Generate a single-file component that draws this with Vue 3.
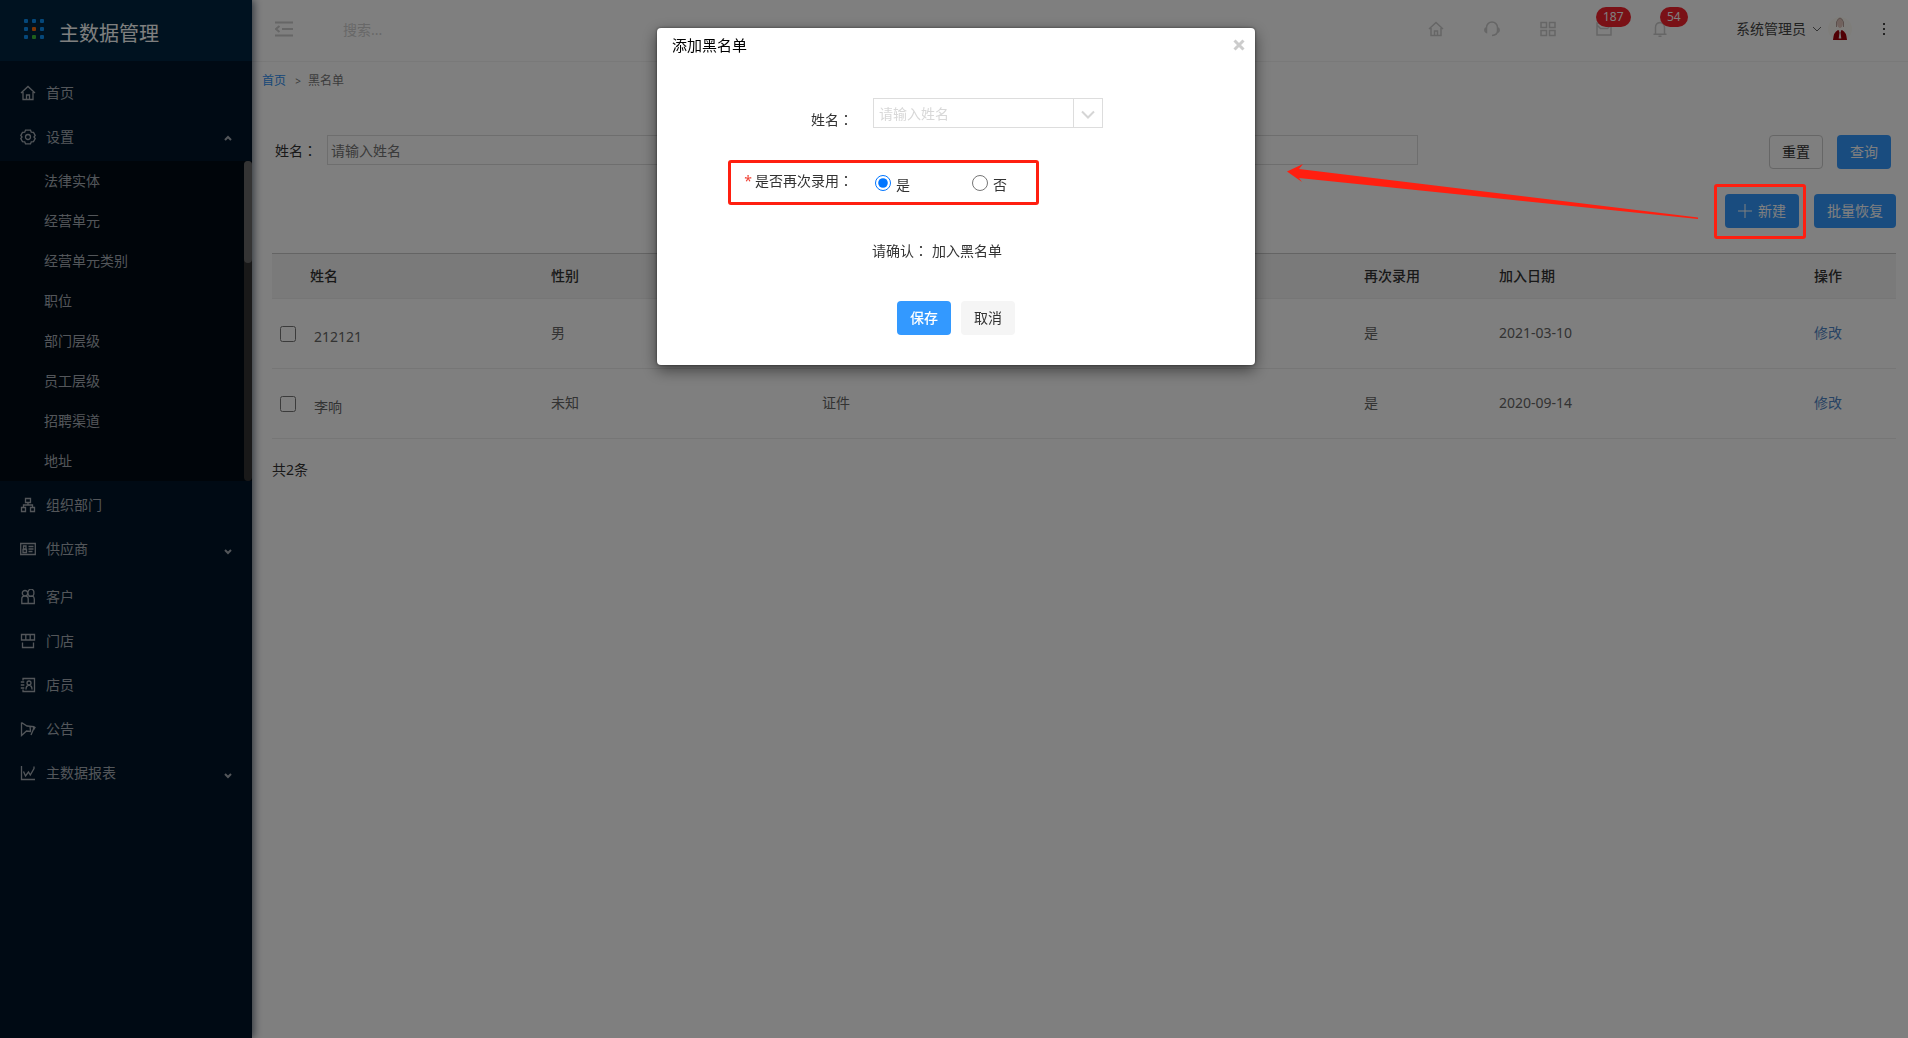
<script setup>
import { ref } from 'vue'

const icons = {
  home: 'M1 8 8 1.5 15 8M3 7v7.5h10V7M6.5 14.5V10h3v4.5',
  gear: 'M5.500 1.200h5l.8 2 2.200.2 1.700 3.100L14 8l1.200 1.500-1.700 3.100-2.200.2-.8 2h-5l-.8-2-2.200-.2L.8 9.500 2 8 .8 6.500l1.700-3.100 2.200-.2zM8 5.500a2.500 2.500 0 1 0 0 5 2.500 2.500 0 1 0 0-5',
  org: 'M5.500 1.500h5v4h-5zM1.500 10.500h4v4h-4zM10.500 10.500h4v4h-4zM8 5.500V8M3.500 10.500V8h9v2.500',
  card: 'M.7 2.500h14.600v11H.7zM3 11.500V8.500h3.500v3zM3.500 5h2.500v3H3.500zM8.500 5.500h5M8.500 8h5M8.500 10.500h4',
  clients: 'M2.300 4.200a2.700 2.700 0 1 1 5.400 0 2.700 2.700 0 1 1-5.400 0M8.200 3.800a2.900 2.900 0 1 1 5.600 0 2.900 2.900 0 1 1-5.600 0M1.800 14.500V10q0-3 3.200-3t3.200 3v4.500zM8.500 7.500q5.500-2 5.800 2.500v4.500H8.500',
  shop: 'M1.500 1.500h13v5.500h-13zM5.800 1.500V7M10.200 1.500V7M2.500 9.500v5h11v-5',
  staff: 'M3 3.500v-2h11.500v13H3v-2M.8 5h3.500M.8 8h3.500M.8 11h3.500M9 4a2 2 0 1 0 0 4 2 2 0 1 0 0-4M6 12.500q0-4 3-4.500 3 .5 3 4.500',
  notice: 'M1.500 1.500v13l5-4.500 4.500.5M1.500 1.500 7 5l6.500.5v2.500L11 14M10 5.500 10.500 10M13.500 5.500l1.500 1-1.500 2.500',
  chart: 'M1.500 1v13.500H15M3.500 6.500 5.500 11l3-4 1.800 3L14 3.500V1.500',
}

const menu = [
  { label: '首页', icon: 'home' },
  {
    label: '设置',
    icon: 'gear',
    open: true,
    children: ['法律实体', '经营单元', '经营单元类别', '职位', '部门层级', '员工层级', '招聘渠道', '地址'],
  },
  { label: '组织部门', icon: 'org' },
  { label: '供应商', icon: 'card', children: [] },
  { label: '客户', icon: 'clients' },
  { label: '门店', icon: 'shop' },
  { label: '店员', icon: 'staff' },
  { label: '公告', icon: 'notice' },
  { label: '主数据报表', icon: 'chart', children: [] },
]

const rows = [
  { name: '212121', sex: '男', card: '', rehire: '是', date: '2021-03-10' },
  { name: '李响', sex: '未知', card: '证件', rehire: '是', date: '2020-09-14' },
]

const logoColors = ['b', 'b', 'b', 'b', 'o', 'b', 'b', 'g', 'b']
const rehire = ref('yes')
</script>

<template>
  <div class="page">
    <aside class="sidebar">
      <div class="brand">
        <div class="logo"><i v-for="(c, i) in logoColors" :key="i" :class="c"></i></div>
        <span>主数据管理</span>
      </div>
      <nav>
        <div v-for="item in menu" :key="item.label">
          <a href="#" class="item">
            <svg class="icon" viewBox="0 0 16 16"><path :d="icons[item.icon]" /></svg>
            <span>{{ item.label }}</span>
            <svg v-if="item.children" class="caret" :class="{ open: item.open }" viewBox="0 0 8 6">
              <path :d="item.open ? 'M1 5 4 2l3 3' : 'M1 1l3 3 3-3'" />
            </svg>
          </a>
          <div v-if="item.children" class="sub">
            <div class="links">
              <a v-for="child in item.children" :key="child" href="#">{{ child }}</a>
            </div>
            <div v-if="item.open" class="track"><div class="thumb"></div></div>
          </div>
        </div>
      </nav>
    </aside>

    <div class="main">
      <header class="topbar">
        <button class="fold" aria-label="收起菜单">
          <svg viewBox="0 0 18 16"><path d="M0 1.500h18M7 8h11M0 14.500h18M4.500 5 1 8l3.500 3" /></svg>
        </button>
        <input class="search" type="text" placeholder="搜索..." aria-label="搜索" />
        <div class="tools">
          <a href="#" class="tool" aria-label="首页">
            <svg viewBox="0 0 16 16"><path :d="icons.home" /></svg>
          </a>
          <a href="#" class="tool" aria-label="客服">
            <svg viewBox="0 0 16 16"><path d="M2.500 7V6.500a5.500 5.500 0 0 1 11 0V10q0 4-5.500 4.500M2.500 6.500q-1.700.5-1.700 2.500t1.700 2.500zM13.500 6.500q1.700.5 1.700 2.500t-1.700 2.500" /></svg>
          </a>
          <a href="#" class="tool" aria-label="应用">
            <svg viewBox="0 0 16 16"><path d="M1 1.500h5.500v5H1zM9.500 1.500H15v5H9.500zM1 9.500h5.500v5H1zM9.500 9.500H15v5H9.500z" /></svg>
          </a>
          <a href="#" class="tool" aria-label="消息">
            <svg viewBox="0 0 16 16"><path d="M1 2h14v12H1zM1 4l3.500 3.500h7L15 4" /></svg>
            <b class="badge">187</b>
          </a>
          <a href="#" class="tool" aria-label="通知">
            <svg viewBox="0 0 16 16"><path d="M3.500 13V6.500q0-4.500 4.500-5 4.500.5 4.500 5V13M1.500 13.200h13M6.500 15.200h3" /></svg>
            <b class="badge">54</b>
          </a>
        </div>
        <button class="user">
          <span>系统管理员</span>
          <svg class="down" viewBox="0 0 10 6"><path d="M1 1l4 4 4-4" /></svg>
          <svg class="avatar" viewBox="0 0 24 24">
            <circle class="disc" cx="12" cy="12" r="12" />
            <ellipse class="face" cx="12" cy="6" rx="3" ry="5" />
            <path class="hair" d="M8.500 10V5q3.500-8 7 0v5" />
            <path class="coat" d="M5 23q.5-8 5-10h4q4.500 2 5 10z" />
            <path class="shirt" d="M10.500 13h3l-1 2.500.8 6h-2.600l.8-6z" />
          </svg>
        </button>
        <button class="more" aria-label="更多">
          <svg viewBox="0 0 4 14"><path d="M1 1h2v2H1zM1 6h2v2H1zM1 11h2v2H1z" /></svg>
        </button>
      </header>

      <div class="crumbs"><a href="#">首页</a><span class="gt">&gt;</span><span>黑名单</span></div>

      <main class="content">
        <form class="filter" @submit.prevent>
          <label for="name-filter">姓名<span class="colon">：</span></label>
          <input id="name-filter" type="text" placeholder="请输入姓名" />
          <button type="reset" class="btn plain">重置</button>
          <button type="submit" class="btn primary">查询</button>
        </form>

        <div class="actions">
          <button class="btn primary">
            <svg class="plus" viewBox="0 0 14 14"><path d="M7 0v14M0 7h14" /></svg>新建
          </button>
          <button class="btn primary">批量恢复</button>
        </div>

        <table>
          <colgroup>
            <col /><col /><col /><col /><col class="c-rehire" /><col class="c-date" /><col class="c-op" />
          </colgroup>
          <thead>
            <tr>
              <th class="first">姓名</th>
              <th>性别</th>
              <th></th>
              <th></th>
              <th>再次录用</th>
              <th>加入日期</th>
              <th>操作</th>
            </tr>
          </thead>
          <tbody>
            <tr v-for="row in rows" :key="row.name">
              <td>
                <label class="pick"><input type="checkbox" /><span>{{ row.name }}</span></label>
              </td>
              <td>{{ row.sex }}</td>
              <td>{{ row.card }}</td>
              <td></td>
              <td>{{ row.rehire }}</td>
              <td>{{ row.date }}</td>
              <td><a href="#">修改</a></td>
            </tr>
          </tbody>
        </table>
        <p class="total">共2条</p>
      </main>
    </div>

    <div class="backdrop">
      <section class="modal" role="dialog" aria-labelledby="modal-title">
        <div class="modal-head">
          <h2 id="modal-title">添加黑名单</h2>
          <button class="close" aria-label="关闭">
            <svg viewBox="0 0 12 12"><path d="M1.500 1.500l9 9M10.500 1.500l-9 9" /></svg>
          </button>
        </div>
        <form class="modal-body" @submit.prevent>
          <div class="field">
            <label class="name low" for="person">姓名<span class="colon">：</span></label>
            <div class="combo">
              <select id="person">
                <option>请输入姓名</option>
              </select>
              <span class="arrow-box">
                <svg viewBox="0 0 14 10"><path d="M1 1.500l6 6 6-6" /></svg>
              </span>
            </div>
          </div>
          <div class="field marked">
            <span id="rehire-label" class="name"><em>*</em>是否再次录用<span class="colon">：</span></span>
            <div class="radios" role="radiogroup" aria-labelledby="rehire-label">
              <label><input v-model="rehire" type="radio" name="rehire" value="yes" /><span>是</span></label>
              <label><input v-model="rehire" type="radio" name="rehire" value="no" /><span>否</span></label>
            </div>
          </div>
          <p class="confirm">请确认<span class="colon">：</span><span>加入黑名单</span></p>
          <div class="buttons">
            <button type="submit" class="btn save">保存</button>
            <button type="button" class="btn cancel">取消</button>
          </div>
        </form>
      </section>
    </div>

    <div class="mark"></div>
    <svg class="pointer" viewBox="0 0 414 62">
      <path d="M1 11.500 17 4l-4 5 399 48.500v1.500L13 18l3 4z" />
    </svg>
  </div>
</template>

<style>
body {
  margin: 0;
}
</style>

<style scoped>
.page {
  position: relative;
  display: flex;
  min-height: 100vh;
  background: #fff;
  color: #333;
  font: 14px/20px "Noto Sans", "Noto Sans CJK SC", sans-serif;
}
.page * {
  box-sizing: border-box;
}
a {
  color: #2e8ff0;
  text-decoration: none;
}
button,
input,
select {
  font: inherit;
  color: inherit;
}
button {
  padding: 0;
  border: 0;
  background: none;
}
svg {
  display: block;
  flex: none;
}
svg path {
  fill: none;
  stroke: currentColor;
}
.colon {
  font-family: "Noto Sans CJK TC", sans-serif;
}

.sidebar {
  position: relative;
  z-index: 1;
  flex: none;
  width: 252px;
  background: #001529;
  box-shadow: 2px 0 8px rgba(0, 21, 41, 0.6);
}
.brand {
  display: flex;
  align-items: center;
  gap: 15px;
  height: 61px;
  padding: 0 24px;
  background: #002540;
  color: #fff;
  font-size: 20px;
}
.brand span {
  padding-top: 6px;
}
.logo {
  display: grid;
  grid-template-columns: repeat(3, 4px);
  gap: 4px;
  margin-top: -4px;
}
.logo i {
  height: 4px;
  border-radius: 1px;
}
.b {
  background: #0a8ff5;
}
.o {
  background: #ff6a0a;
}
.g {
  background: #3fbf3a;
}
nav {
  padding-top: 10px;
}
.item {
  display: flex;
  align-items: center;
  gap: 10px;
  height: 44px;
  padding: 0 20px;
  color: #a6adb4;
}
.icon {
  width: 16px;
  height: 16px;
}
.icon path {
  stroke-width: 1.3;
}
.caret {
  width: 8px;
  height: 6px;
  margin: 6px 0 0 auto;
}
.caret.open {
  margin-top: 2px;
}
.caret path {
  stroke-width: 2;
}
.sub {
  display: flex;
  margin: 2px 0;
  background: #000a14;
}
.links {
  flex: 1;
}
.links a {
  display: block;
  padding-left: 44px;
  color: #a6adb4;
  line-height: 40px;
}
.track {
  width: 8px;
  border-radius: 4px;
  background: #333;
}
.thumb {
  height: 102px;
  border-radius: 4px;
  background: #686868;
}

.main {
  flex: 1;
  min-width: 0;
}
.topbar {
  display: flex;
  align-items: center;
  height: 62px;
  padding: 0 16px 4px 23px;
  border-bottom: 1px solid #f2f2f2;
}
.fold {
  color: #ccc;
}
.fold svg {
  width: 18px;
  height: 16px;
}
.fold path {
  stroke-width: 2;
}
.search {
  flex: 1;
  min-width: 0;
  margin-left: 50px;
  padding: 2px 0 0;
  border: 0;
  background: none;
}
.search::placeholder {
  color: #d0d0d0;
}
.tools {
  display: flex;
  margin-right: 48px;
  color: #ccc;
}
.tool {
  position: relative;
  display: flex;
  justify-content: center;
  width: 56px;
  color: inherit;
}
.tool svg {
  width: 16px;
  height: 16px;
}
.tool path {
  stroke-width: 1.5;
}
.badge {
  position: absolute;
  left: 20px;
  bottom: 10px;
  padding: 0 7px;
  border-radius: 10px;
  background: #f5222d;
  color: #fff;
  font-size: 12px;
  font-weight: 400;
}
.tool:last-child .badge {
  left: 28px;
}
.user {
  display: flex;
  align-items: center;
  gap: 6px;
  color: #444;
}
.down {
  width: 10px;
  height: 6px;
  color: #666;
}
.avatar {
  width: 24px;
  height: 24px;
}
.disc {
  fill: #fdfbf4;
}
.face {
  fill: #e3c4bb;
}
.avatar .hair {
  stroke: #b69f98;
}
.avatar .coat {
  fill: #a30008;
  stroke: none;
}
.avatar .shirt {
  fill: #f4eeee;
  stroke: none;
}
.more {
  margin-left: 24px;
  padding: 0 6px;
}
.more svg {
  width: 4px;
  height: 14px;
}
.more path {
  fill: #444;
  stroke: none;
}

.crumbs {
  display: flex;
  padding: 9px 10px;
  color: #777;
  font-size: 12px;
}
.gt {
  width: 22px;
  padding-left: 2px;
  text-align: center;
  font-size: 10px;
}
.content {
  padding: 35px 12px 0 20px;
}
.filter {
  display: flex;
  align-items: flex-start;
  padding: 0 5px 0 3px;
}
.filter label {
  width: 52px;
  line-height: 30px;
}
.filter input {
  flex: 1;
  min-width: 0;
  height: 30px;
  margin-right: 351px;
  padding: 0 3px;
  border: 1px solid #ddd;
}
.filter input::placeholder {
  color: #757575;
}
.filter .plain {
  margin-right: 14px;
}
.btn {
  display: flex;
  align-items: center;
  height: 34px;
  padding: 0 12px;
  border: 1px solid transparent;
  border-radius: 4px;
  white-space: nowrap;
}
.plain {
  border-color: #ccc;
}
.primary {
  background: #39f;
  color: #fff;
}
.actions {
  display: flex;
  justify-content: flex-end;
  gap: 15px;
  margin: 25px 0;
}
.plus {
  width: 14px;
  height: 14px;
  margin-right: 6px;
}
table {
  width: 100%;
  border-collapse: separate;
  border-spacing: 0;
  table-layout: fixed;
}
.c-rehire {
  width: 135px;
}
.c-date {
  width: 315px;
}
.c-op {
  width: 90px;
}
th,
td {
  padding: 0 8px;
  border-bottom: 1px solid #ececec;
  text-align: left;
}
th {
  height: 46px;
  border-top: 1px solid #c8c8c8;
  background: #f5f5f5;
  font-weight: 500;
}
th.first {
  padding-left: 38px;
}
td {
  height: 70px;
  padding-bottom: 2px;
  color: #666;
}
td a {
  color: #4f86c6;
}
.pick {
  display: flex;
  align-items: center;
  gap: 18px;
  padding-top: 2px;
}
.pick input {
  width: 16px;
  height: 16px;
  margin: 0;
}
.pick span {
  padding-top: 6px;
}
.total {
  margin: 21px 0;
}

.backdrop {
  position: fixed;
  inset: 0;
  z-index: 2;
  display: flex;
  align-items: flex-start;
  justify-content: center;
  padding: 28px 0 0 4px;
  background: rgba(0, 0, 0, 0.5);
}
.modal {
  width: 598px;
  border-radius: 4px;
  background: #fff;
  box-shadow: 0 5px 15px rgba(0, 0, 0, 0.5), 0 0 3px rgba(0, 0, 0, 0.5);
}
.modal-head {
  display: flex;
  align-items: center;
  justify-content: space-between;
  height: 36px;
  padding: 0 10px 2px 15px;
}
.modal-head h2 {
  margin: 0;
  color: #000;
  font-size: 15px;
  font-weight: 400;
}
.close {
  color: #ccc;
}
.close svg {
  width: 12px;
  height: 12px;
}
.close path {
  stroke-width: 3;
}
.modal-body {
  padding: 34px 0 30px;
}
.field {
  position: relative;
  display: flex;
  gap: 20px;
}
.name {
  width: 196px;
  text-align: right;
  line-height: 30px;
}
.name em {
  margin-right: 3px;
  color: #f04134;
  font-style: normal;
}
.low {
  padding-top: 6px;
}
.combo {
  position: relative;
  width: 230px;
  height: 30px;
  border: 1px solid #ddd;
}
.combo select {
  width: 100%;
  height: 28px;
  padding: 2px 30px 0 5px;
  border: 0;
  background: none;
  color: #d8d8d8;
  appearance: none;
}
.arrow-box {
  position: absolute;
  inset: 0 0 0 auto;
  display: flex;
  align-items: center;
  justify-content: center;
  width: 29px;
  border-left: 1px solid #ddd;
  color: #d5d5d5;
  pointer-events: none;
}
.arrow-box svg {
  width: 14px;
  height: 10px;
  margin-top: 4px;
}
.arrow-box path {
  stroke-width: 2;
}
.marked {
  height: 45px;
  margin-top: 25px;
  padding-top: 5px;
}
.marked::after {
  content: "";
  position: absolute;
  inset: 0 216px 0 71px;
  border: 3px solid #ff1f10;
  border-radius: 3px;
  pointer-events: none;
}
.radios {
  display: flex;
  gap: 62px;
  height: 36px;
  padding-left: 2px;
}
.radios label {
  display: flex;
  align-items: center;
  gap: 5px;
}
.radios input {
  width: 16px;
  height: 16px;
  margin: 0;
}
.radios span {
  padding-top: 3px;
}
.confirm {
  margin: 35px 0 40px 215px;
}
.confirm span:last-child {
  margin-left: 4px;
}
.buttons {
  display: flex;
  justify-content: center;
  gap: 10px;
}
.save {
  background: #39f;
  color: #fff;
  font-weight: 500;
}
.cancel {
  background: #f5f5f5;
}

.mark {
  position: absolute;
  top: 184px;
  right: 102px;
  z-index: 3;
  width: 92px;
  height: 55px;
  border: 3px solid #ff1f10;
  border-radius: 3px;
}
.pointer {
  position: absolute;
  top: 160px;
  right: 208px;
  z-index: 3;
  width: 414px;
  height: 62px;
}
.pointer path {
  fill: #ff1f10;
  stroke: none;
}
</style>
